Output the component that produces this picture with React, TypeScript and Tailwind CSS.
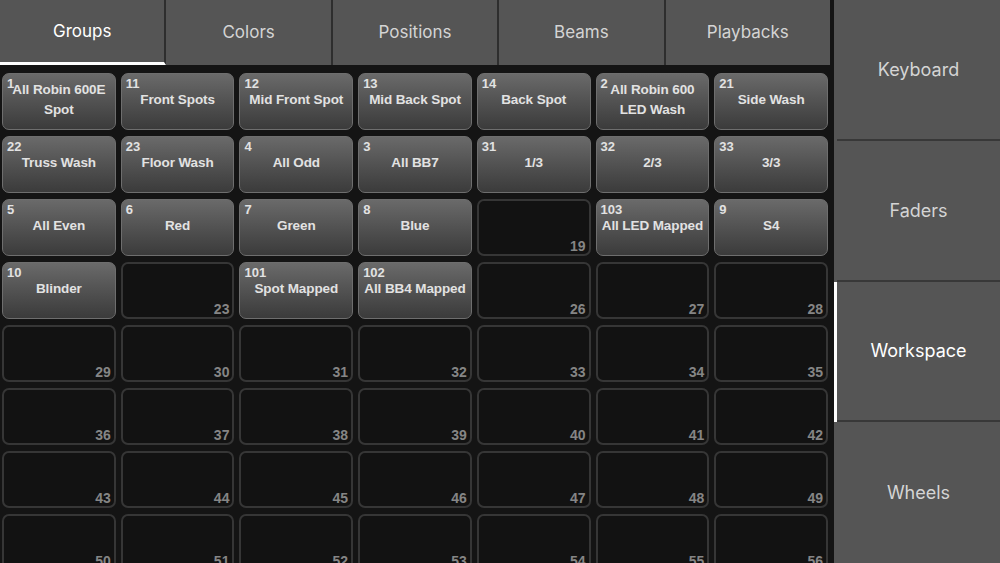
import React from 'react';

interface Cell {
    id: number;
    label?: string;
}

const tabs = ['Groups', 'Colors', 'Positions', 'Beams', 'Playbacks'];
const sideItems = ['Keyboard', 'Faders', 'Workspace', 'Wheels'];

// first rows hold stored groups, the rest are empty slots
const filled: (Cell | number)[] = [
    { id: 1, label: 'All Robin 600E Spot' },
    { id: 11, label: 'Front Spots' },
    { id: 12, label: 'Mid Front Spot' },
    { id: 13, label: 'Mid Back Spot' },
    { id: 14, label: 'Back Spot' },
    { id: 2, label: 'All Robin 600 LED Wash' },
    { id: 21, label: 'Side Wash' },
    { id: 22, label: 'Truss Wash' },
    { id: 23, label: 'Floor Wash' },
    { id: 4, label: 'All Odd' },
    { id: 3, label: 'All BB7' },
    { id: 31, label: '1/3' },
    { id: 32, label: '2/3' },
    { id: 33, label: '3/3' },
    { id: 5, label: 'All Even' },
    { id: 6, label: 'Red' },
    { id: 7, label: 'Green' },
    { id: 8, label: 'Blue' },
    19,
    { id: 103, label: 'All LED Mapped' },
    { id: 9, label: 'S4' },
    { id: 10, label: 'Blinder' },
    23,
    { id: 101, label: 'Spot Mapped' },
    { id: 102, label: 'All BB4 Mapped' },
    26,
    27,
    28,
];

const cells: (Cell | number)[] = [...filled];
for (let n = 29; n <= 56; n++) cells.push(n);

const GroupButton: React.FC<{ cell: Cell }> = ({ cell }) => (
    <div className="relative h-[57px] rounded-[7px] border border-[#6e6e6e] bg-gradient-to-b from-[#6a6a6a] to-[#3b3b3b] flex items-center justify-center text-[#e2e2e2]">
        <span className="absolute left-[4px] top-[2px] text-[13px] font-bold leading-[16px]">{cell.id}</span>
        <span className="w-[106px] text-center text-[13.5px] font-bold leading-[20px] pb-[3px] tracking-[-0.1px]">{cell.label}</span>
    </div>
);

const EmptySlot: React.FC<{ n: number }> = ({ n }) => (
    <div className="relative h-[57px] rounded-[7px] border-2 border-[#363636] bg-[#121212]">
        <span className="absolute right-[3px] bottom-[0px] text-[14px] font-bold leading-[16px] text-[#858585]">{n}</span>
    </div>
);

const App: React.FC = () => {
    return (
        <div className="w-[1000px] h-[563px] flex bg-[#141414] overflow-hidden" style={{ fontFamily: "Inter, 'Liberation Sans', sans-serif" }}>
            {/* main area */}
            <div className="w-[830px] flex flex-col">
                <div className="h-[65px] flex bg-[#555555]">
                    {tabs.map((t, i) => (
                        <div
                            key={t}
                            className={`flex-1 flex items-center justify-center text-[17px] ${i < tabs.length - 1 ? 'border-r-2 border-[#2e2e2e]' : ''} ${i === 0 ? 'text-white border-b-[3px] border-b-white pt-[2px]' : 'text-[#d4d4d4]'}`}
                        >
                            {t}
                        </div>
                    ))}
                </div>
                <div
                    className="flex-1 overflow-hidden grid grid-cols-7 auto-rows-[57px] gap-x-[5px] gap-y-[6px] pl-[2px] pr-[2px] pt-[8px]"
                    style={{ fontFamily: "'Liberation Sans', Arial, sans-serif" }}
                >
                    {cells.map((c, i) =>
                        typeof c === 'number' ? <EmptySlot key={i} n={c} /> : <GroupButton key={i} cell={c} />
                    )}
                </div>
            </div>

            {/* side menu */}
            <div className="ml-[4px] flex-1 flex flex-col bg-[#555555]">
                {sideItems.map((s, i) => (
                    <div key={s} className="flex-1 flex pl-[3px] relative">
                        {s === 'Workspace' && <div className="absolute left-0 top-0 bottom-0 w-[3px] bg-white" />}
                        <div className={`flex-1 flex items-center justify-center text-[18px] ${i < sideItems.length - 1 ? 'border-b-2 border-[#383838]' : ''} ${s === 'Workspace' ? 'text-white' : 'text-[#d4d4d4]'}`}>
                            {s}
                        </div>
                    </div>
                ))}
            </div>
        </div>
    );
};

export default App;
